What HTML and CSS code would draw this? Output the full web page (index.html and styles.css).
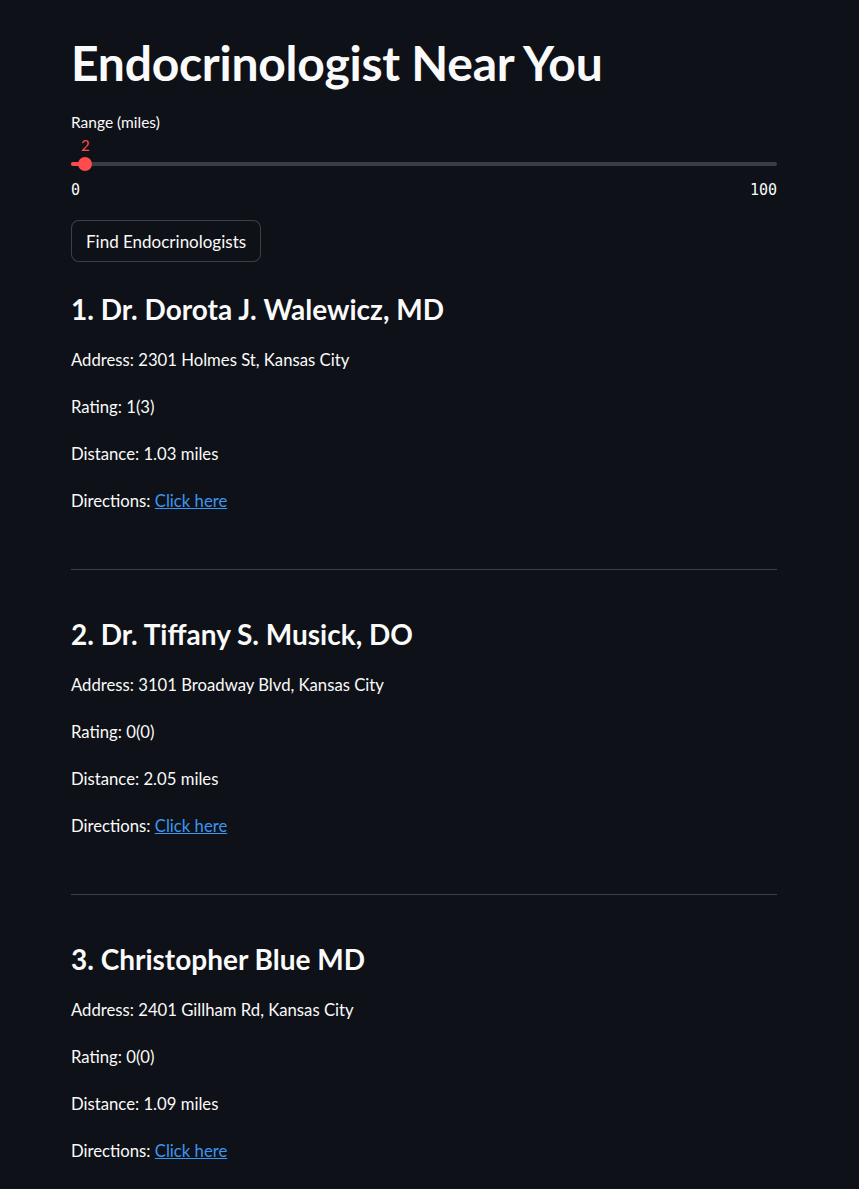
FILE: index.html
```html
<!DOCTYPE html>
<html>
<head>
<meta charset="utf-8">
<link rel="stylesheet" href="styles.css">
</head>
<body>
<main class="page">
  <h1 class="title">Endocrinologist Near You</h1>
  <div class="slider">
    <div class="slider-label">Range (miles)</div>
    <div class="slider-value-row"><span class="slider-value">2</span></div>
    <div class="track">
      <div class="fill"></div>
      <div class="thumb"></div>
    </div>
    <div class="ticks"><span>0</span><span>100</span></div>
  </div>
  <button class="btn">Find Endocrinologists</button>

  <section class="result">
    <h3 class="name">1. Dr. Dorota J. Walewicz, MD</h3>
    <p>Address: 2301 Holmes St, Kansas City</p>
    <p>Rating: 1(3)</p>
    <p>Distance: 1.03 miles</p>
    <p>Directions: <a href="#">Click here</a></p>
  </section>
  <hr class="divider">
  <section class="result">
    <h3 class="name">2. Dr. Tiffany S. Musick, DO</h3>
    <p>Address: 3101 Broadway Blvd, Kansas City</p>
    <p>Rating: 0(0)</p>
    <p>Distance: 2.05 miles</p>
    <p>Directions: <a href="#">Click here</a></p>
  </section>
  <hr class="divider">
  <section class="result">
    <h3 class="name">3. Christopher Blue MD</h3>
    <p>Address: 2401 Gillham Rd, Kansas City</p>
    <p>Rating: 0(0)</p>
    <p>Distance: 1.09 miles</p>
    <p>Directions: <a href="#">Click here</a></p>
  </section>
</main>
</body>
</html>
```

FILE: styles.css
```css
html, body {
  margin: 0;
  padding: 0;
  background: #0e1117;
  color: #fafafa;
  font-family: Lato, "Noto Sans", sans-serif;
}
.page {
  width: 706px;
  margin-left: 71px;
  padding-top: 32px;
}
.title {
  margin: 0;
  font-size: 48px;
  font-weight: 700;
  line-height: 62px;
  letter-spacing: -0.25px;
}
.slider {
  margin-top: 18px;
}
.slider-label {
  font-size: 15.5px;
  line-height: 20px;
}
.slider-value-row {
  height: 30px;
  position: relative;
}
.slider-value {
  position: absolute;
  left: 10px;
  top: 3px;
  font-size: 15px;
  line-height: 20px;
  color: #ff4b4b;
}
.track {
  position: relative;
  height: 4px;
  background: #3b3d46;
  border-radius: 2px;
}
.fill {
  position: absolute;
  left: 0;
  top: 0;
  height: 4px;
  width: 14px;
  background: #ff4b4b;
  border-radius: 2px;
}
.thumb {
  position: absolute;
  left: 7px;
  top: -5px;
  width: 14px;
  height: 14px;
  border-radius: 50%;
  background: #ff4b4b;
}
.ticks {
  display: flex;
  justify-content: space-between;
  margin-top: 15px;
  font-family: "DejaVu Sans Mono", monospace;
  font-size: 15px;
  line-height: 18px;
}
.btn {
  margin-top: 21px;
  height: 42px;
  padding: 0 14px;
  background: #0e1117;
  color: #fafafa;
  border: 1px solid rgba(250, 250, 250, 0.2);
  border-radius: 8px;
  font-family: Lato, sans-serif;
  font-size: 17px;
}
.result {
  display: flex;
  flex-direction: column;
  gap: 21px;
}
.result:first-of-type {
  margin-top: 27px;
}
.name {
  margin: 0 0 -3px 0;
  font-size: 28px;
  font-weight: 700;
  line-height: 40px;
}
.result p {
  margin: 0;
  font-size: 16.7px;
  line-height: 26px;
}
.result a {
  color: #3d96f0;
}
.divider {
  margin: 55px 0 44px 0;
  border: none;
  border-top: 1px solid rgba(250, 250, 250, 0.2);
}
```
